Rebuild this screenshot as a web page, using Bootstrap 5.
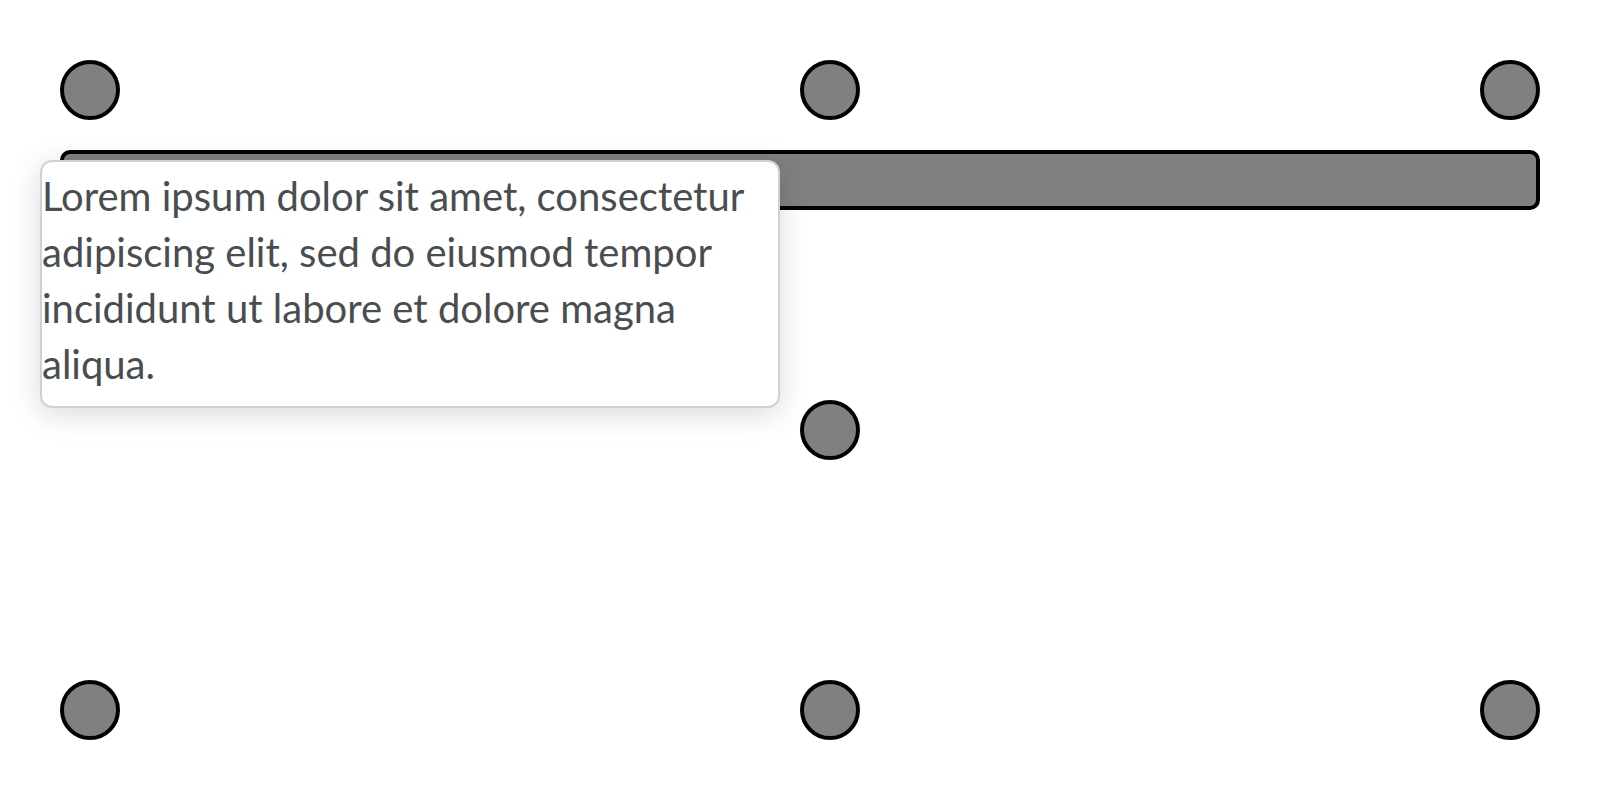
<!DOCTYPE html>
<html lang="en">
<head>
<meta charset="utf-8">
<meta name="viewport" content="width=device-width, initial-scale=1">
<title>Popover targets</title>
<link href="https://cdn.jsdelivr.net/npm/bootstrap@5.3.0/dist/css/bootstrap.min.css" rel="stylesheet">
<style>
  .stage { padding: 0 60px; }
  .stage-top { padding-top: 60px; gap: 30px; }
  .stage-bottom { padding-bottom: 60px; }
  .target { background: #808080; border: 4px solid #000; padding: 0; height: 60px; }
  .target-dot { width: 60px; border-radius: 50%; }
  .target-bar { border-radius: 10px; }
  .tip {
    top: 10px; left: -20px; width: 50%;
    padding: 6px 0 14px;
    background: #fff;
    border: 2px solid #cad3dc;
    border-radius: 12px;
    box-shadow: 0 6px 30px rgba(0, 0, 0, .15);
    color: #494d50;
    font: 400 40px/56px Lato, sans-serif;
  }
</style>
</head>
<body class="bg-white">
<main class="stage vh-100">
  <section class="stage-top h-50 d-flex flex-column">
    <div class="row g-0">
      <div class="col-6 d-flex"><button type="button" class="target target-dot" aria-label="Top left"></button></div>
      <div class="col-6 d-flex justify-content-between">
        <button type="button" class="target target-dot" aria-label="Top"></button>
        <button type="button" class="target target-dot" aria-label="Top right"></button>
      </div>
    </div>
    <div class="position-relative">
      <button type="button" class="target target-bar d-block w-100" aria-label="Wide target" aria-describedby="tip"></button>
      <div class="tip position-absolute" id="tip" role="tooltip">Lorem ipsum dolor sit amet, consectetur adipiscing elit, sed do eiusmod tempor incididunt ut labore et dolore magna aliqua.</div>
    </div>
  </section>
  <section class="stage-bottom h-50 d-flex flex-column justify-content-between">
    <div class="row g-0">
      <div class="col-6 offset-6 d-flex"><button type="button" class="target target-dot" aria-label="Center"></button></div>
    </div>
    <div class="row g-0">
      <div class="col-6 d-flex"><button type="button" class="target target-dot" aria-label="Bottom left"></button></div>
      <div class="col-6 d-flex justify-content-between">
        <button type="button" class="target target-dot" aria-label="Bottom"></button>
        <button type="button" class="target target-dot" aria-label="Bottom right"></button>
      </div>
    </div>
  </section>
</main>
<script src="https://cdn.jsdelivr.net/npm/bootstrap@5.3.0/dist/js/bootstrap.bundle.min.js"></script>
</body>
</html>
